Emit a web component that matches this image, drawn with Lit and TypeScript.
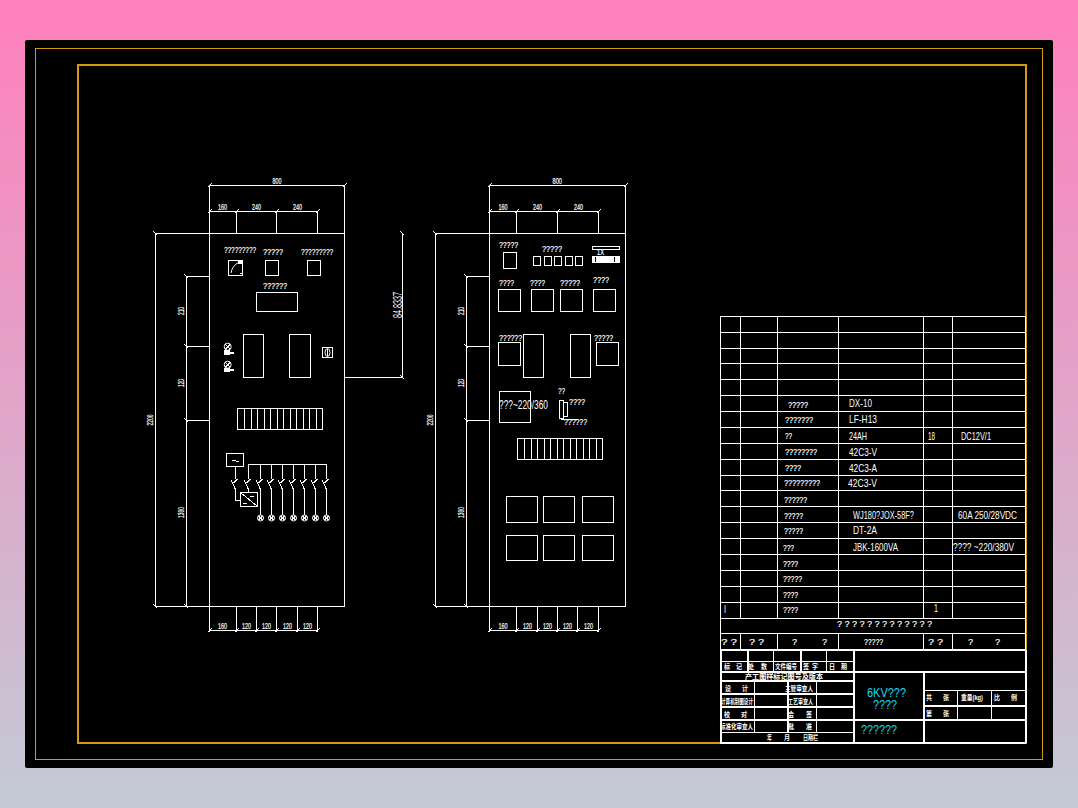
import { LitElement, html, css, svg } from 'lit'
import { customElement } from 'lit/decorators.js'

// every coordinate below is a page pixel, the svg viewBox starts at the panel corner
type Seg = [number, number, number, number]
type Box = [number, number, number, number]
// x1, x2, baseline, text
type Label = [number, number, number, string]

const hl = (x1: number, x2: number, y: number): Seg => [x1, y, x2, y]
const vl = (x: number, y1: number, y2: number): Seg => [x, y1, x, y2]
const box = (x1: number, x2: number, y1: number, y2: number): Box => [x1, y1, x2 - x1, y2 - y1]

const tickH = (x: number, y: number): Seg => [x - 2, y + 2, x + 2, y - 2]
const tickV = (x: number, y: number): Seg => [x - 2.5, y - 2.5, x + 2, y + 2]

function cabinetFrame(left: number, right: number, dimL: number, dimM: number, top: number[], bottom: number[]): Seg[] {
  const out: Seg[] = [
    hl(left, right, 185.5),
    vl(left, 185, 632),
    vl(right, 185, 606.5),
    hl(top[0], top[top.length - 1], 211.5),
    hl(dimL, right, 233.5),
    hl(dimL, right, 606.5),
    vl(dimL, 233, 607),
    vl(dimM, 276, 607),
    hl(dimM, left, 276.5),
    hl(dimM, left, 346.5),
    hl(dimM, left, 420.5),
    hl(bottom[0], bottom[bottom.length - 1], 630.5),
    tickH(left, 185.5),
    tickH(right, 185.5),
    tickV(dimL, 233.5),
    tickV(dimL, 606.5),
    tickV(dimM, 276.5),
    tickV(dimM, 346.5),
    tickV(dimM, 420.5),
    tickV(dimM, 606.5),
  ]
  for (const x of top) {
    out.push(vl(x, 211, 233), tickH(x, 211.5))
  }
  for (const x of bottom) {
    out.push(vl(x, 607, 632), tickH(x, 630.5))
  }
  return out
}

const LEFT_TOP = [209.5, 236.5, 276.5, 317.5]
const LEFT_BOTTOM = [209.5, 236.5, 256.5, 276.5, 297.5, 317.5]
const RIGHT_TOP = [489.5, 516.5, 557.5, 598.5]
const RIGHT_BOTTOM = [489.5, 516.5, 537.5, 557.5, 577.5, 598.5]

function strip(x1: number, x2: number, y1: number, y2: number): Seg[] {
  const step = (x2 - x1) / 13
  const out: Seg[] = []
  for (let i = 1; i < 13; i++) out.push(vl(Math.round(x1 + step * i) + 0.5, y1, y2))
  return out
}

const BREAKERS = [260.5, 271.5, 282.5, 293.5, 304.5, 315.5, 326.5]

function breakerLines(): Seg[] {
  const out: Seg[] = [
    hl(248.5, 326.5, 464.5),
    vl(235.5, 467, 479),
    [231, 480, 235.5, 489.5],
    vl(235.5, 489, 500.5),
    hl(235.5, 240.5, 500.5),
    tickH(235.5, 481),
    vl(248.5, 464, 479),
    [244, 480, 248.5, 489.5],
    vl(248.5, 489, 492.5),
    tickH(248.5, 481),
    [240.5, 492.5, 257.5, 506.5],
    hl(250, 254, 496.5),
    hl(243, 247, 503.5),
    hl(232, 236, 460.5),
    hl(236, 239, 461.5),
  ]
  for (const x of BREAKERS) {
    out.push(vl(x, 464, 479), [x - 4.5, 480, x, 489.5], vl(x, 489, 515), tickH(x, 481))
    out.push([x - 2, 516, x + 2, 520], [x - 2, 520, x + 2, 516])
  }
  return out
}

const DRAWING_LINES: Seg[] = [
  ...cabinetFrame(209.5, 344.5, 155.5, 186.5, LEFT_TOP, LEFT_BOTTOM),
  ...cabinetFrame(489.5, 625.5, 435.5, 466.5, RIGHT_TOP, RIGHT_BOTTOM),
  hl(345, 402.5, 377.5),
  vl(402.5, 233, 378),
  tickV(402.5, 233.5),
  tickV(402.5, 377.5),
  ...strip(237.5, 322.5, 408, 430),
  ...strip(517.5, 602.5, 438, 460),
  ...breakerLines(),
  hl(561, 578, 419.5),
  // left cabinet meter face
  hl(240, 243, 273.5),
  // relay icons
  [225.5, 344.5, 230, 349],
  [225.5, 349, 230, 344.5],
  [225.5, 362.5, 230, 367],
  [225.5, 367, 230, 362.5],
  vl(327.5, 349, 356),
]

const DRAWING_BOXES: Box[] = [
  box(228.5, 242.5, 260.5, 275.5),
  box(265.5, 278.5, 260.5, 275.5),
  box(307.5, 320.5, 260.5, 275.5),
  box(256.5, 297.5, 292.5, 311.5),
  box(243.5, 263.5, 334.5, 377.5),
  box(289.5, 310.5, 334.5, 377.5),
  box(322.5, 332.5, 347.5, 357.5),
  box(237.5, 322.5, 408.5, 429.5),
  box(226.5, 243.5, 453.5, 466.5),
  box(240.5, 257.5, 492.5, 506.5),
  box(503.5, 516.5, 252.5, 268.5),
  box(533.5, 540.5, 256.5, 265.5),
  box(544.5, 551.5, 256.5, 265.5),
  box(554.5, 561.5, 256.5, 265.5),
  box(565.5, 572.5, 256.5, 265.5),
  box(575.5, 582.5, 256.5, 265.5),
  box(592.5, 619.5, 246.5, 249.5),
  box(498.5, 520.5, 289.5, 311.5),
  box(531.5, 553.5, 289.5, 311.5),
  box(560.5, 582.5, 289.5, 311.5),
  box(593.5, 615.5, 289.5, 311.5),
  box(498.5, 520.5, 342.5, 365.5),
  box(523.5, 543.5, 334.5, 377.5),
  box(570.5, 590.5, 334.5, 377.5),
  box(596.5, 618.5, 342.5, 365.5),
  box(499.5, 530.5, 391.5, 422.5),
  box(559.5, 563.5, 400.5, 418.5),
  box(563.5, 567.5, 402.5, 416.5),
  box(517.5, 602.5, 438.5, 459.5),
  box(506.5, 537.5, 496.5, 522.5),
  box(543.5, 574.5, 496.5, 522.5),
  box(582.5, 613.5, 496.5, 522.5),
  box(506.5, 537.5, 535.5, 560.5),
  box(543.5, 574.5, 535.5, 560.5),
  box(582.5, 613.5, 535.5, 560.5),
]

const DRAWING_TEXT: Label[] = [
  [224, 256, 253, '?????????'],
  [263, 283, 254.5, '?????'],
  [301, 333, 255, '?????????'],
  [263, 287, 288.5, '??????'],
  [272.5, 281.5, 184, '800'],
  [218, 227, 210, '160'],
  [252, 261, 210, '240'],
  [293, 302, 210, '240'],
  [218, 227, 629, '160'],
  [242, 251, 629, '120'],
  [262, 271, 629, '120'],
  [283, 292, 629, '120'],
  [303, 312, 629, '120'],
  [499, 518, 248, '?????'],
  [542, 562, 252, '?????'],
  [597, 604, 255, '1X'],
  [499, 514, 285.5, '????'],
  [530, 545, 285.5, '????'],
  [560, 580, 285.5, '?????'],
  [593, 609, 283, '????'],
  [499, 522, 340.5, '??????'],
  [594, 613, 340.5, '?????'],
  [558, 565, 394, '??'],
  [569, 585, 405, '????'],
  [564, 587, 425, '??????'],
  [552.5, 562, 184, '800'],
  [498.5, 507.5, 210, '160'],
  [533, 542, 210, '240'],
  [574, 583, 210, '240'],
  [498.5, 507.5, 629, '160'],
  [523, 532, 629, '120'],
  [543, 552, 629, '120'],
  [563, 572, 629, '120'],
  [584, 593, 629, '120'],
]

// cx, cy, length, text, rotated dimension labels
const VERTICAL_TEXT: [number, number, number, string][] = [
  [184, 311, 8, '210'],
  [184, 383, 8, '120'],
  [153, 420, 11, '2200'],
  [184, 512.5, 11, '1300'],
  [464, 311, 8, '210'],
  [464, 383, 8, '120'],
  [433, 420, 11, '2200'],
  [464, 512.5, 11, '1300'],
]

const TABLE_COLS = [720.5, 740.5, 777.5, 838.5, 923.5, 952.5]
const TABLE_ROWS = [316.5, 332.5, 348.5, 363.5, 379.5, 395.5, 411.5, 427.5, 443.5, 459.5, 475.5, 490.5, 506.5, 522.5, 538.5, 554.5, 570.5, 586.5, 602.5, 618.5, 633.5]

const TABLE_LINES: Seg[] = [
  ...TABLE_ROWS.map((y) => hl(720.5, 1025.5, y)),
  ...TABLE_COLS.map((x) => vl(x, 316, 618.5)),
  ...TABLE_COLS.map((x) => vl(x, 633, 650)),
  vl(720.5, 618, 634),
  vl(1025.5, 316, 650),
]

const TABLE_TEXT: Label[] = [
  [788, 808, 407.5, '?????'],
  [849, 872, 407, 'DX-10'],
  [785, 813, 423, '???????'],
  [849, 877, 423, 'LF-H13'],
  [785, 792, 438.5, '??'],
  [849, 867, 440, '24AH'],
  [928, 935, 440, '18'],
  [961, 991, 440, 'DC12V/1'],
  [785, 817, 455, '????????'],
  [849, 877, 456, '42C3-V'],
  [785, 801, 471, '????'],
  [849, 877, 472, '42C3-A'],
  [784, 820, 485.5, '?????????'],
  [848, 877, 487, '42C3-V'],
  [784, 807, 503, '??????'],
  [784, 803, 519, '?????'],
  [853, 914, 519, 'WJ180?JOX-58F?'],
  [958, 1017, 519, '60A 250/28VDC'],
  [784, 803, 534, '?????'],
  [853, 877, 534, 'DT-2A'],
  [783, 794, 551, '???'],
  [853, 898, 551, 'JBK-1600VA'],
  [953, 1014, 551, '???? ~220/380V'],
  [783, 798, 567, '????'],
  [783, 802, 582, '?????'],
  [783, 798, 598, '????'],
  [724, 726, 612.5, 'I'],
  [783, 798, 613, '????'],
  [934, 938, 611.5, '1'],
  [837, 932, 627, '? ? ? ? ? ? ? ? ? ? ? ? ?'],
  [721, 737, 645, '? ?'],
  [749, 764, 645, '? ?'],
  [792, 797, 645, '?'],
  [822, 827, 645, '?'],
  [864, 883, 645, '?????'],
  [928, 943, 645, '? ?'],
  [968, 973, 645, '?'],
  [995, 1000, 645, '?'],
]

const TITLE_LINES: Seg[] = [
  hl(720.5, 853.5, 661.5),
  hl(720.5, 853.5, 732.5),
  vl(773.5, 650, 672),
  vl(826.5, 650, 672),
  vl(754.5, 681, 732),
  vl(816.5, 681, 732),
  hl(924, 1025, 690.5),
  vl(957.5, 690, 719),
  vl(991.5, 690, 719),
]

const TITLE_HEAVY: Seg[] = [
  hl(720, 1026, 650),
  hl(720, 1026, 743),
  vl(720.5, 650, 743),
  vl(1025.5, 650, 743),
  vl(853.5, 650, 743),
  vl(923.5, 672, 743),
  hl(720, 1026, 672),
  hl(853, 1026, 719.5),
  hl(720, 853, 719.5),
  hl(720, 853, 681),
  hl(720, 853, 694),
  hl(720, 853, 707),
  hl(924, 1026, 705.5),
  vl(787.5, 681, 732),
  vl(747.5, 650, 672),
  vl(800.5, 650, 672),
]

const TITLE_TEXT: Label[] = [
  [724, 742, 668.5, '标 记'],
  [748, 767, 668.5, '处 数'],
  [775, 797, 668.5, '文件编号'],
  [803, 818, 668.5, '签 字'],
  [829, 847, 668.5, '日 期'],
  [745, 823, 678.5, '产工图样标记图号及版本'],
  [725, 748, 691, '设 计'],
  [785, 813, 691, '主管审查人'],
  [721, 753, 703.5, '计算机制图设计'],
  [788, 813, 703.5, '工艺审查人'],
  [724, 747, 717, '校 对'],
  [788, 812, 717, '会 签'],
  [720, 753, 729, '标准化审查人'],
  [788, 812, 729, '批 准'],
  [767, 772, 740, '年'],
  [784, 790, 740, '月'],
  [803, 818, 740, '日期栏'],
  [926, 949, 700, '共 张'],
  [961, 983, 700, '重量(kg)'],
  [994, 1017, 700, '比 例'],
  [926, 949, 715.5, '第 张'],
]

// spaced cjk labels are two glyphs pushed to the cell sides, not one stretched run
const splitSpaced = (labels: Label[]): Label[] =>
  labels.flatMap((l): Label[] => {
    const parts = l[3].split(' ')
    if (parts.length !== 2) return [l]
    return [
      [l[0], l[0] + 6, l[2], parts[0]],
      [l[1] - 6, l[1], l[2], parts[1]],
    ]
  })

const line = (s: Seg, cls = 'ln') => svg`<line class=${cls} x1=${s[0]} y1=${s[1]} x2=${s[2]} y2=${s[3]}></line>`
const rect = (b: Box) => svg`<rect class="ln" x=${b[0]} y=${b[1]} width=${b[2]} height=${b[3]}></rect>`
const label = (l: Label, cls = 'tx') =>
  svg`<text class=${cls} x=${l[0]} y=${l[2]} textLength=${l[1] - l[0]} lengthAdjust="spacingAndGlyphs">${l[3]}</text>`

@customElement('app-root')
export class AppRoot extends LitElement {
  static styles = css`
    :host {
      display: block;
      height: 808px;
      background: linear-gradient(180deg, #ff80bb 0%, #c3cad6 100%);
    }

    .page {
      height: 808px;
      box-sizing: border-box;
      padding: 40px 25px;
    }

    .panel {
      width: 1028px;
      height: 728px;
      background: #000;
      border-radius: 2px;
    }

    svg {
      display: block;
      font-family: 'Liberation Sans', 'Noto Sans CJK SC', sans-serif;
    }

    .ln {
      fill: none;
      stroke: #fff;
      stroke-width: 1;
      shape-rendering: crispEdges;
    }

    .hv {
      stroke: #fff;
      stroke-width: 2;
      shape-rendering: crispEdges;
    }

    .fl {
      fill: #fff;
      shape-rendering: crispEdges;
    }

    .blk {
      fill: #000;
      shape-rendering: crispEdges;
    }

    .fine {
      fill: none;
      stroke: #d39c12;
      stroke-width: 1;
      shape-rendering: crispEdges;
    }

    .wide {
      fill: none;
      stroke: #d39c12;
      stroke-width: 2;
      shape-rendering: crispEdges;
    }

    .tx {
      fill: #fff;
      font-size: 9px;
      stroke: #fff;
      stroke-width: 0.2;
    }

    .md {
      fill: #fff;
      font-size: 11px;
    }

    .big {
      fill: #fff;
      font-size: 13px;
    }

    .cjk {
      fill: #fff;
      font-size: 7px;
      font-weight: 700;
    }

    .cy {
      fill: #14dcf5;
      font-size: 12.5px;
    }

    .cv {
      fill: none;
      stroke: #fff;
      stroke-width: 1;
    }
  `

  renderIcons() {
    return svg`
      <path class="cv" d="M231 273 Q232 266 239 262"></path>
      <rect class="fl" x="238" y="261" width="4" height="3"></rect>
      <ellipse class="cv" cx="327.5" cy="352.5" rx="2.5" ry="4"></ellipse>
      <circle class="cv" cx="227.7" cy="346.7" r="3.5"></circle>
      <rect class="fl" x="224" y="350" width="6" height="5"></rect>
      <rect class="fl" x="230" y="352" width="4" height="2"></rect>
      <circle class="cv" cx="227.7" cy="364.7" r="3.5"></circle>
      <rect class="fl" x="224" y="368" width="6" height="4"></rect>
      <rect class="fl" x="230" y="369" width="4" height="2"></rect>
      ${BREAKERS.map((x) => svg`<circle class="cv" cx=${x} cy="518" r="3"></circle>`)}
      <rect class="fl" x="592" y="256" width="28" height="7"></rect>
      <rect class="blk" x="595" y="257" width="1" height="5"></rect>
      <rect class="blk" x="614" y="257" width="1" height="5"></rect>
    `
  }

  render() {
    return html`
      <div class="page">
        <div class="panel">
          <svg width="1028" height="728" viewBox="25 40 1028 728">
            <rect class="fine" x="35.5" y="48.5" width="1007" height="711"></rect>
            <rect class="wide" x="78" y="65" width="948" height="678"></rect>

            ${DRAWING_BOXES.map((b) => rect(b))}
            ${DRAWING_LINES.map((s) => line(s))}
            ${this.renderIcons()}
            ${DRAWING_TEXT.map((l) => label(l))}
            ${VERTICAL_TEXT.map(
              (v) => svg`<text class="tx" text-anchor="middle" x=${v[0]} y=${v[1]} transform="rotate(-90 ${v[0]} ${v[1]})" textLength=${v[2]} lengthAdjust="spacingAndGlyphs">${v[3]}</text>`,
            )}
            <text class="big" text-anchor="middle" x="402" y="305" transform="rotate(-90 402 305)" textLength="26" lengthAdjust="spacingAndGlyphs">84.8337</text>
            ${label([499, 548, 409, '???~220/360'], 'big')}

            ${TABLE_LINES.map((s) => line(s))}
            ${TABLE_TEXT.map((l) => label(l, /^[? ]+$/.test(l[3]) ? 'tx' : 'md'))}

            ${TITLE_LINES.map((s) => line(s))}
            ${TITLE_HEAVY.map((s) => line(s, 'hv'))}
            ${splitSpaced(TITLE_TEXT).map((l) => label(l, 'cjk'))}
            ${label([867, 906, 697, '6KV???'], 'cy')}
            ${label([873, 897, 708.5, '????'], 'cy')}
            ${label([861, 897, 734, '??????'], 'cy')}
          </svg>
        </div>
      </div>
    `
  }
}
